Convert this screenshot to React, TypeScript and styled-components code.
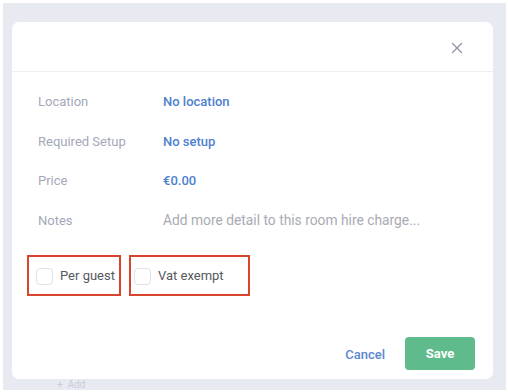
import styled, { createGlobalStyle } from "styled-components"

const GlobalStyle = createGlobalStyle`
  html, body {
    margin: 0;
    padding: 0;
    background: #ffffff;
    font-family: Roboto, "Liberation Sans", Arial, sans-serif;
  }
`

const Backdrop = styled.div`
  margin: 3px 2px 0 3px;
  height: 387px;
  background-color: #e8eaf2;
  padding: 19px 13px 0 9px;
  box-sizing: border-box;
`

const Modal = styled.div`
  width: 481px;
  height: 357px;
  background-color: #ffffff;
  border-radius: 7px;
  display: flex;
  flex-direction: column;
  box-sizing: border-box;
`

const Header = styled.div`
  height: 50px;
  border-bottom: 1px solid #eceef3;
  display: flex;
  align-items: center;
  justify-content: flex-end;
  padding-right: 30px;
  box-sizing: border-box;
`

const CloseButton = styled.button`
  border: 0;
  background: none;
  padding: 0;
  width: 12px;
  height: 12px;
  display: flex;
  cursor: pointer;
  margin-top: 2px;
`

const Body = styled.div`
  padding: 10px 0 0 26px;
`

const FieldRow = styled.div`
  height: 39.5px;
  display: flex;
  align-items: center;
  font-size: 13px;
`

const Label = styled.div`
  width: 125px;
  color: #a3a8ba;
`

const Value = styled.div<{ $muted?: boolean }>`
  color: ${(p) => (p.$muted ? "#a9abb3" : "#4d80cf")};
  font-weight: ${(p) => (p.$muted ? 400 : 500)};
  font-size: ${(p) => (p.$muted ? "13.8px" : "13px")};
`

const Options = styled.div`
  display: flex;
  gap: 8px;
  margin: 15px 0 0 15px;
`

const Highlight = styled.label<{ $width: number; $inset: number }>`
  width: ${(p) => p.$width}px;
  height: 41px;
  border: 2px solid #d8452f;
  box-sizing: border-box;
  display: flex;
  align-items: center;
  gap: 7px;
  padding-left: ${(p) => p.$inset}px;
  font-size: 13px;
  color: #565860;
  cursor: pointer;
`

const Box = styled.span`
  width: 17px;
  height: 17px;
  border: 1px solid #dfe1e7;
  border-radius: 4px;
  box-sizing: border-box;
  background: #fff;
  margin-top: 2px;
`

const Footer = styled.div`
  margin-top: auto;
  display: flex;
  align-items: center;
  justify-content: flex-end;
  gap: 20px;
  padding: 0 18px 9px 0;
`

const CancelButton = styled.button`
  border: 0;
  background: none;
  padding: 0;
  color: #5a86d2;
  font-family: inherit;
  font-size: 13px;
  font-weight: 500;
  margin-top: 1px;
`

const SaveButton = styled.button`
  width: 70px;
  height: 33px;
  border: 0;
  border-radius: 4px;
  background-color: #5fbb8b;
  color: #ffffff;
  font-family: inherit;
  font-size: 13px;
  font-weight: 700;
`

const Behind = styled.div`
  margin: 1px 0 0 45px;
  font-size: 10px;
  line-height: 10px;
  color: #c9ccd8;
`

const fields = [
  { label: "Location", value: "No location" },
  { label: "Required Setup", value: "No setup" },
  { label: "Price", value: "€0.00" },
  { label: "Notes", value: "Add more detail to this room hire charge...", muted: true },
]

export default function App() {
  return (
    <>
      <GlobalStyle />
      <Backdrop>
        <Modal>
          <Header>
            <CloseButton aria-label="Close">
              <svg width="12" height="12" viewBox="0 0 12 12">
                <path d="M1.5 1.5l9 9M10.5 1.5l-9 9" stroke="#8e93a6" strokeWidth="1.3" strokeLinecap="round" />
              </svg>
            </CloseButton>
          </Header>
          <Body>
            {fields.map((f) => (
              <FieldRow key={f.label}>
                <Label>{f.label}</Label>
                <Value $muted={f.muted}>{f.value}</Value>
              </FieldRow>
            ))}
          </Body>
          <Options>
            <Highlight $width={94} $inset={7}>
              <Box />
              Per guest
            </Highlight>
            <Highlight $width={121} $inset={3}>
              <Box />
              Vat exempt
            </Highlight>
          </Options>
          <Footer>
            <CancelButton>Cancel</CancelButton>
            <SaveButton>Save</SaveButton>
          </Footer>
        </Modal>
        <Behind>+&nbsp;&nbsp;Add</Behind>
      </Backdrop>
    </>
  )
}
